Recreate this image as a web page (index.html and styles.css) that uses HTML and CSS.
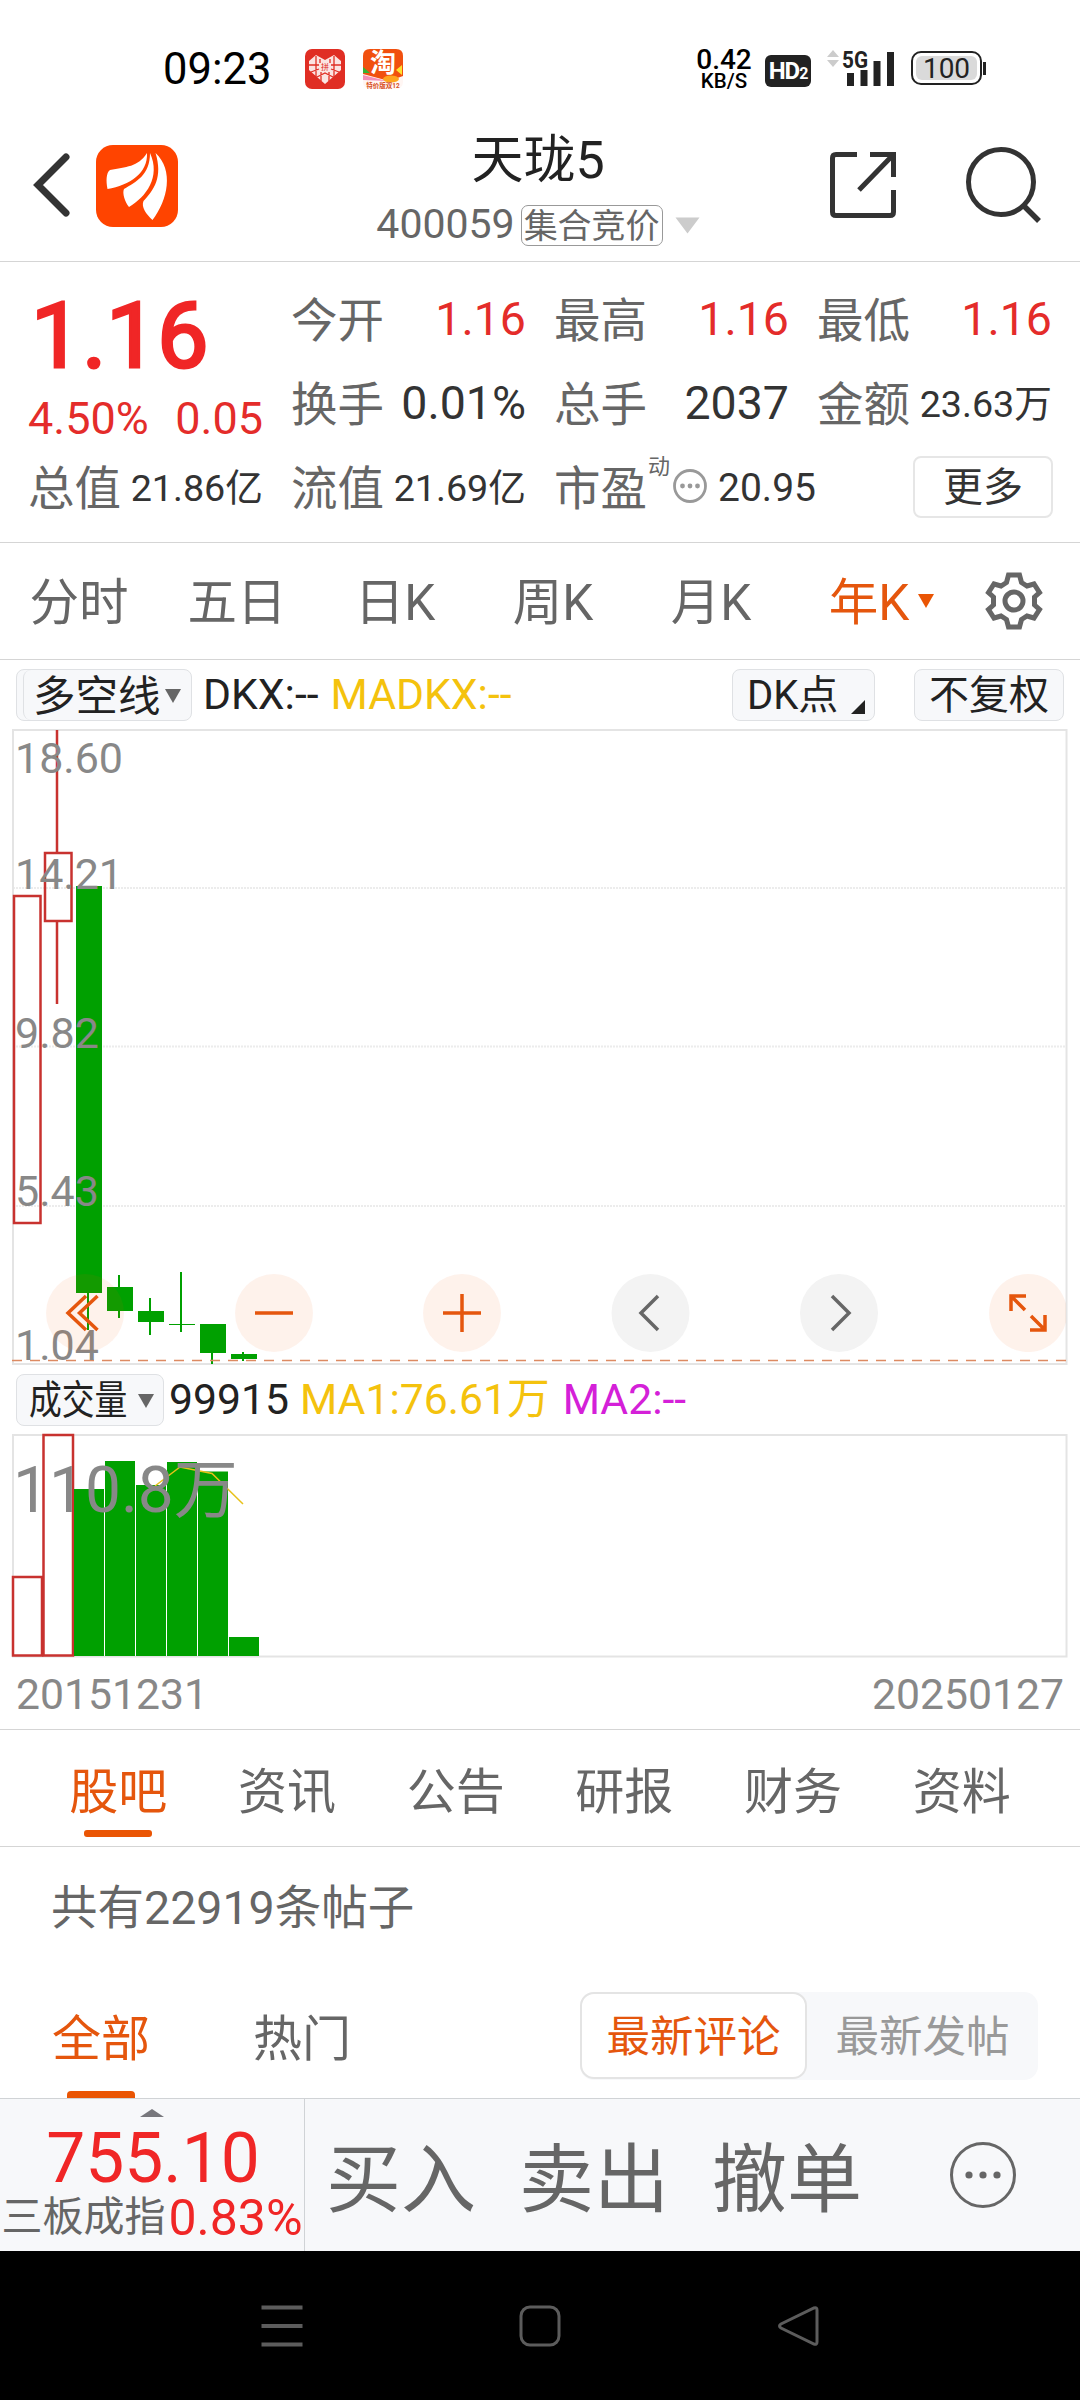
FILE: index.html
```html
<!DOCTYPE html>
<html lang="zh-CN">
<head>
    <meta charset="UTF-8">
    <title>天珑5</title>
    <link rel="stylesheet" href="styles.css">
</head>
<body>
<div class="status">
    <span class="time">09:23</span>
    <svg class="app1" width="40" height="40" viewBox="0 0 40 40">
        <rect width="40" height="40" rx="7" fill="#e02e24"/>
        <path d="M20 35 L4 21 V12 L11 6 L20 11 L29 6 L36 12 V21 Z" fill="#fbe4e2"/>
        <path d="M4 16 H14 M26 16 H36 M6 23 L14 20 M34 23 L26 20 M11 7 V29 M29 7 V29 M15 10 V14 M25 10 V14 M16 23 V32 M24 23 V32 M12 28 L20 24 L28 28" stroke="#e02e24" stroke-width="1.3" fill="none"/>
        <text x="20" y="21" font-size="8" text-anchor="middle" fill="#e02e24">拼</text>
    </svg>
    <svg class="app2" width="40" height="40" viewBox="0 0 40 40">
        <rect width="40" height="40" rx="7" fill="#fff6f3"/>
        <path d="M7 0 H33 Q40 0 40 7 V27 L26 32 L0 25 V7 Q0 0 7 0 Z" fill="#f1500f"/>
        <path d="M0 18 L7 24 L0 24 Z" fill="#35b336"/>
        <path d="M33 21 L39 16 L39 26 Z" fill="#ffe22e"/>
        <path d="M0 26 L24 32 L0 31 Z" fill="#f48fb8"/>
        <ellipse cx="28" cy="30" rx="8" ry="3.5" fill="#ffa51f"/>
        <text x="20" y="23" font-size="26" font-weight="700" text-anchor="middle" fill="#fff">淘</text>
        <text x="20" y="38.500" font-size="6.500" font-weight="700" text-anchor="middle" fill="#d8501e">特价版双12</text>
    </svg>
    <div class="speed"><b>0.42</b><i>KB/S</i></div>
    <div class="hd">HD<small>2</small></div>
    <svg class="signal" width="68" height="40" viewBox="0 0 68 40">
        <path d="M0 8 L6 1 L12 8 Z M0 11 L6 18 L12 11 Z" fill="#ccc"/>
        <text x="15" y="18.500" font-size="24" font-weight="700" fill="#222" textLength="26" lengthAdjust="spacingAndGlyphs">5G</text>
        <path d="M20 24h7v13h-7z M33.500 21h7v16h-7z M46.500 12h7v25h-7z M60 3h7v34h-7z" fill="#222"/>
    </svg>
    <div class="battery"><span>100</span></div>
</div>

<div class="header">
    <svg class="back" width="40" height="64" viewBox="0 0 40 64">
        <path d="M34 4 L6 32 L34 60" fill="none" stroke="#333" stroke-width="7" stroke-linecap="round"/>
    </svg>
    <svg class="logo" width="82" height="82" viewBox="0 0 82 82">
        <rect width="82" height="82" rx="17" fill="#ff4400"/>
        <path d="M51 8 C42 22 30 22 14 25 C10 28 10 36 11.500 44 C34 40 52 28 51 8 Z" fill="#fff"/>
        <path d="M54 8 C54 30 40 37 28 44 C26 48 29 57 33 62 C50 52 65 32 54 8 Z" fill="#fff"/>
        <path d="M59.500 8 C67 32 58 45 47.500 56 C45 62 50 69 56.500 75 C72 55 78 25 59.500 8 Z" fill="#fff"/>
    </svg>
    <div class="name">
        <h1>天珑5</h1>
        <div class="code">
            <span>400059</span>
            <em>集合竞价</em>
            <svg width="25" height="17" viewBox="0 0 25 17"><path d="M0.500 0.500 H24.500 L12.500 16.500 Z" fill="#ccc"/></svg>
        </div>
    </div>
    <svg class="share" width="66" height="66" viewBox="0 0 66 66">
        <path d="M27 2.500 H6 Q2.500 2.500 2.500 6 V60 Q2.500 63.500 6 63.500 H60 Q63.500 63.500 63.500 60 V38 M40 2.500 H63.500 V25 M63 3 L29 38" fill="none" stroke="#333" stroke-width="5"/>
    </svg>
    <svg class="search" width="80" height="80" viewBox="0 0 80 80">
        <circle cx="36" cy="36" r="32.500" fill="none" stroke="#333" stroke-width="5"/>
        <path d="M59 60 L74 75" stroke="#333" stroke-width="5.500"/>
    </svg>
</div>

<div class="quote">
    <div class="main">
        <div class="price">1.16</div>
        <div class="change"><span>4.50%</span><span>0.05</span></div>
    </div>
    <div class="cell"><label>今开</label><b class="red">1.16</b></div>
    <div class="cell"><label>最高</label><b class="red">1.16</b></div>
    <div class="cell"><label>最低</label><b class="red">1.16</b></div>
    <div class="cell"><label>换手</label><b>0.01%</b></div>
    <div class="cell"><label>总手</label><b>2037</b></div>
    <div class="cell"><label>金额</label><b class="small">23.63万</b></div>
    <div class="cell"><label>总值</label><b class="small">21.86亿</b></div>
    <div class="cell"><label>流值</label><b class="small">21.69亿</b></div>
    <div class="cell pe">
        <label>市盈</label><sup>动</sup>
        <svg width="34" height="34" viewBox="0 0 34 34">
            <circle cx="17" cy="17" r="15.500" fill="none" stroke="#999" stroke-width="2.800"/>
            <g fill="#999"><circle cx="9.500" cy="17" r="2.400"/><circle cx="17" cy="17" r="2.400"/><circle cx="24.500" cy="17" r="2.400"/></g>
        </svg>
        <b>20.95</b>
    </div>
    <div class="more">更多</div>
</div>

<div class="period">
    <span>分时</span>
    <span>五日</span>
    <span>日K</span>
    <span>周K</span>
    <span>月K</span>
    <span class="on">年K<i class="arrow"></i></span>
    <svg width="60" height="60" viewBox="-30 -30 60 60" fill="none" stroke="#666" stroke-width="5">
        <path d="M-5.500 -26 H5.500 L7.500 -18.500 L13 -15 L20 -17 L25.500 -8.500 L20.500 -4 V4 L25.500 8.500 L20 17 L13 15 L7.500 18.500 L5.500 26 H-5.500 L-7.500 18.500 L-13 15 L-20 17 L-25.500 8.500 L-20.500 4 V-4 L-25.500 -8.500 L-20 -17 L-13 -15 L-7.500 -18.500 Z"/>
        <circle r="9"/>
    </svg>
</div>

<div class="bar">
    <div class="btn multi"><span>多空线</span><i class="arrow"></i></div>
    <span class="dkx">DKX:--</span>
    <span class="yellow">MADKX:--</span>
    <div class="btn dk">DK点<i></i></div>
    <div class="btn fq">不复权</div>
</div>

<svg class="kline" width="1080" height="640" viewBox="0 727 1080 640">
    <g stroke="#ececec" stroke-width="2" stroke-dasharray="2 1">
        <path d="M13 888 H1066 M13 1046.500 H1066 M13 1206 H1066"/>
    </g>
    <rect x="13" y="730" width="1053.500" height="634" fill="none" stroke="#e4e4e4" stroke-width="2"/>
    <g fill="none" stroke="#c8322f" stroke-width="2.500">
        <rect x="14" y="896" width="26.500" height="327"/>
        <rect x="45" y="853" width="26.500" height="68"/>
        <path d="M57 730 V852 M57 922 V1004"/>
    </g>
    <g fill="#00a000">
        <rect x="76" y="886" width="26" height="407"/>
        <rect x="87" y="1293" width="2" height="37"/>
        <rect x="107" y="1287" width="26" height="24"/>
        <rect x="118" y="1275" width="2" height="43"/>
        <rect x="138" y="1311" width="26" height="11"/>
        <rect x="149" y="1298" width="2" height="37"/>
        <rect x="169" y="1324" width="26" height="1"/>
        <rect x="180" y="1272" width="2" height="60"/>
        <rect x="200" y="1324" width="26" height="29"/>
        <rect x="211" y="1353" width="2" height="11"/>
        <rect x="231" y="1354" width="26" height="5"/>
        <rect x="242" y="1352" width="2" height="9"/>
    </g>
    <path d="M12 1360.500 H1066" stroke="#dd8a62" stroke-width="1.300" stroke-dasharray="10 8"/>
    <g font-size="43" fill="#888">
        <text x="15" y="773">18.60</text>
        <text x="15" y="888.500">14.21</text>
        <text x="15" y="1047.500">9.82</text>
        <text x="15" y="1206">5.43</text>
        <text x="15" y="1360">1.04</text>
    </g>
    <g fill="#f05a00" fill-opacity=".08">
        <circle cx="85" cy="1313" r="39"/>
        <circle cx="274" cy="1313" r="39"/>
        <circle cx="462" cy="1313" r="39"/>
        <path d="M1066 1304 A39 39 0 1 0 1066 1322 Z"/>
    </g>
    <g fill="#f3f3f3">
        <circle cx="650.500" cy="1313" r="39"/>
        <circle cx="839" cy="1313" r="39"/>
    </g>
    <g fill="none" stroke="#e5560d" stroke-width="3.500">
        <path d="M86 1296 L68 1313 L86 1330 M97.500 1296 L79.500 1313 L97.500 1330"/>
        <path d="M255 1313 H293 M443 1313 H481 M462 1294 V1332"/>
        <path d="M1011 1311 V1296 H1026 M1012 1297 L1025 1310 M1030 1330 H1045 V1315 M1044 1329 L1031 1316"/>
    </g>
    <path d="M658 1296 L641 1313 L658 1330 M832 1296 L849 1313 L832 1330" fill="none" stroke="#666" stroke-width="3.500"/>
</svg>

<div class="bar vol">
    <div class="btn cjl"><span>成交量</span><i class="arrow"></i></div>
    <span class="num">99915</span>
    <span class="yellow">MA1:76.61万</span>
    <span class="purple">MA2:--</span>
</div>

<svg class="volume" width="1080" height="226" viewBox="0 1432 1080 226">
    <rect x="13" y="1435" width="1053.500" height="221.500" fill="none" stroke="#e4e4e4" stroke-width="2"/>
    <g fill="none" stroke="#c8322f" stroke-width="2.500">
        <rect x="13" y="1577" width="29" height="78.500"/>
        <rect x="43.500" y="1435" width="29.500" height="220.500"/>
    </g>
    <g fill="#00a000">
        <rect x="74" y="1489" width="30" height="167"/>
        <rect x="105" y="1461" width="30" height="195"/>
        <rect x="136" y="1485" width="30" height="171"/>
        <rect x="167" y="1462" width="30" height="194"/>
        <rect x="198" y="1471.500" width="30" height="184.500"/>
        <rect x="229" y="1637" width="30" height="19"/>
    </g>
    <path d="M155 1486 L180 1467 L212 1473.500 L243 1504" fill="none" stroke="#e8c11a" stroke-width="1.500"/>
    <text x="13" y="1512" font-size="64" fill="#888">110.8万</text>
</svg>

<div class="dates"><span>20151231</span><span>20250127</span></div>

<div class="tabs">
    <span class="on">股吧</span>
    <span>资讯</span>
    <span>公告</span>
    <span>研报</span>
    <span>财务</span>
    <span>资料</span>
</div>

<div class="total">共有22919条帖子</div>

<div class="filter">
    <span class="on">全部</span>
    <span>热门</span>
    <div class="sort"><b>最新评论</b><span>最新发帖</span></div>
</div>

<div class="trade">
    <div class="index">
        <svg width="24" height="8" viewBox="0 0 24 8"><path d="M0 8 L12 0 L24 8 Z" fill="#77777c"/></svg>
        <div class="point">755.10</div>
        <div class="rate"><span>三板成指</span><b>0.83%</b></div>
    </div>
    <span class="act">买入</span>
    <span class="act">卖出</span>
    <span class="act">撤单</span>
    <svg class="dots" width="68" height="68" viewBox="0 0 68 68">
        <circle cx="34" cy="34" r="31.500" fill="none" stroke="#666" stroke-width="3"/>
        <g fill="#666"><circle cx="20" cy="34" r="3.600"/><circle cx="34" cy="34" r="3.600"/><circle cx="48" cy="34" r="3.600"/></g>
    </svg>
</div>

<div class="nav">
    <svg width="44" height="44" viewBox="0 0 44 44"><path d="M1.500 3.500 H42.500 M1.500 22 H42.500 M1.500 40.500 H42.500" stroke="#5c5c5c" stroke-width="4"/></svg>
    <svg width="44" height="44" viewBox="0 0 44 44"><rect x="3" y="3" width="38" height="38" rx="9" fill="none" stroke="#5c5c5c" stroke-width="3"/></svg>
    <svg width="44" height="44" viewBox="0 0 44 44"><path d="M38 4 Q41 3 41 6 V38 Q41 41 38 40 L5 24 Q2 22 5 20 Z" fill="none" stroke="#5c5c5c" stroke-width="3"/></svg>
</div>
</body>
</html>
```

FILE: styles.css
```css
* {
    box-sizing: border-box;
}

body {
    margin: 0;
    width: 1080px;
    height: 2400px;
    background: #fff;
    color: #333;
    font-family: Roboto, "Noto Sans CJK SC", sans-serif;
    line-height: 1.2;
    overflow: hidden;
}

svg {
    display: block;
    flex: none;
}

b, i, em {
    font-weight: 400;
    font-style: normal;
}

/* 状态栏 */
.status {
    display: flex;
    align-items: flex-start;
    height: 90px;
    padding: 49px 93px 0 163px;
    color: #000;
}

.time {
    width: 142px;
    font-size: 43.5px;
    line-height: 42px;
}

.app2 {
    margin-left: 18px;
}

.speed {
    width: 62px;
    margin-left: auto;
    text-align: center;
}

.speed b, .speed i {
    display: block;
    font-size: 28px;
    font-weight: 500;
    line-height: 22px;
}

.speed i {
    font-size: 20.5px;
    line-height: 20px;
}

.hd {
    width: 46px;
    height: 32px;
    margin: 6px 0 0 10px;
    border-radius: 6px;
    background: #222;
    color: #fff;
    font-size: 24px;
    font-weight: 700;
    line-height: 33px;
    text-align: center;
    letter-spacing: -1px;
}

.hd small {
    font-size: 16px;
}

.signal {
    margin-left: 16px;
}

.battery {
    position: relative;
    width: 71px;
    height: 34px;
    margin: 2px 5px 0 16px;
    padding: 3px;
    border: 2px solid #222;
    border-radius: 10px;
}

.battery span {
    display: block;
    height: 24px;
    border-radius: 6px;
    background: #dadada;
    color: #222;
    font-size: 28px;
    line-height: 25px;
    text-align: center;
}

.battery::after {
    content: "";
    position: absolute;
    top: 9px;
    right: -6px;
    width: 3px;
    height: 13px;
    background: #222;
}

/* 头部 */
.header {
    display: flex;
    align-items: center;
    height: 172px;
    padding: 19px 35px 0 32px;
    border-bottom: 1px solid #d5d5d5;
}

.logo {
    margin: 1px 0 0 24px;
}

.name {
    display: flex;
    flex-direction: column;
    align-items: center;
    align-self: flex-start;
    width: 326px;
    margin-left: 197px;
}

.name h1 {
    margin: 13px 0 0;
    font-size: 52px;
    font-weight: 400;
    line-height: 78px;
    color: #222;
}

.code {
    display: flex;
    align-items: center;
    height: 42px;
    margin-top: 4px;
    color: #666;
}

.code span {
    font-size: 41px;
}

.code em {
    height: 41px;
    margin: 0 12px 0 6px;
    padding: 0 2px;
    border: 1.5px solid #999;
    border-radius: 7px;
    font-size: 34px;
    line-height: 40px;
}

.share {
    margin-left: 129px;
}

.search {
    margin: 2px 0 0 auto;
}

/* 行情 */
.quote {
    display: grid;
    grid-template-columns: repeat(4, 235px);
    grid-template-rows: repeat(3, 84px);
    column-gap: 28px;
    height: 281px;
    padding: 16px 28px 0;
    border-bottom: 1px solid #d5d5d5;
}

.main {
    grid-row: 1 / 3;
    color: #f02626;
}

.price {
    height: 114px;
    padding-left: 3px;
    font-size: 91px;
    line-height: 116px;
    -webkit-text-stroke: 3px #f02626;
}

.change {
    display: flex;
    justify-content: space-between;
    font-size: 45px;
    line-height: 54px;
    color: #e42c2a;
}

.cell {
    display: flex;
    align-items: center;
    justify-content: space-between;
    white-space: nowrap;
}

.cell label {
    padding-top: 3px;
    font-size: 46.5px;
    color: #666;
}

.cell b {
    font-size: 46.5px;
}

.cell b.small {
    padding-top: 1px;
    font-size: 37.7px;
}

.cell b.red {
    color: #e42c2a;
}

.pe {
    width: 264px;
    justify-content: flex-start;
}

.pe sup {
    align-self: flex-start;
    margin: 6px 3px 0 1px;
    font-size: 22px;
    line-height: 30px;
    color: #666;
}

.pe svg {
    margin-top: -5px;
}

.pe b {
    margin-left: 11px;
    font-size: 39px;
}

.more {
    align-self: center;
    justify-self: end;
    width: 140px;
    height: 62px;
    margin: -3px -1px 0 0;
    border: 2px solid #e6e6e6;
    border-radius: 8px;
    font-size: 40px;
    line-height: 60px;
    text-align: center;
}

/* 周期 */
.period {
    display: flex;
    align-items: center;
    height: 117px;
    border-bottom: 1px solid #d5d5d5;
    font-size: 49.5px;
    color: #666;
}

.period span {
    position: relative;
    width: 158px;
    padding-top: 6px;
    text-align: center;
}

.period svg {
    margin-left: 36px;
}

.arrow {
    width: 0;
    height: 0;
    border: 8px solid transparent;
    border-top: 14px solid #666;
    border-bottom: 0;
}

.period .on {
    color: #e5560d;
}

.period .arrow {
    position: absolute;
    top: 26px;
    right: 14px;
    border-top-color: #ea5504;
}

/* 指标 */
.bar {
    display: flex;
    align-items: center;
    height: 67px;
    padding: 3px 16px 0;
    font-size: 42.7px;
    white-space: nowrap;
    color: #222;
}

.btn {
    display: flex;
    align-items: center;
    height: 52px;
    padding-top: 2px;
    border: 1px solid #dfe1e4;
    border-radius: 8px;
    background: #f7f8fa;
    font-size: 40px;
}

.multi {
    position: relative;
    width: 176px;
    padding-left: 16px;
    font-size: 42.5px;
}

.multi::before {
    content: "";
    position: absolute;
    top: 0;
    left: 6px;
    width: 30px;
    height: 50px;
    border-left: 1px solid #dfe1e4;
    border-radius: 8px;
}

.multi .arrow {
    margin-left: 4px;
}

.dkx {
    margin-left: 11px;
}

.yellow {
    margin-left: 12px;
    color: #f4c20d;
}

.dk {
    width: 143px;
    margin-left: auto;
    padding-left: 14px;
}

.dk i {
    margin: 22px 0 0 13px;
    border-left: 14px solid transparent;
    border-bottom: 14px solid #222;
}

.fq {
    width: 150px;
    margin-left: 39px;
    justify-content: center;
}

.vol {
    height: 65px;
    padding-top: 1px;
}

.cjl {
    width: 148px;
    padding-left: 12px;
}

/* 按钮里放不下，横向压缩 */
.cjl span {
    width: 98px;
    transform: scaleX(.82);
    transform-origin: left;
}

.cjl .arrow {
    margin-left: 11px;
}

.num {
    margin-left: 5px;
}

.vol .yellow {
    margin-left: 11px;
}

.purple {
    margin-left: 13px;
    color: #d420d8;
}

.dates {
    display: flex;
    justify-content: space-between;
    height: 72px;
    padding: 0 16px;
    border-bottom: 1px solid #d5d5d5;
    font-size: 42.7px;
    line-height: 73px;
    color: #888;
}

/* 栏目 */
.tabs {
    display: flex;
    height: 117px;
    padding: 0 34px;
    border-bottom: 1px solid #d5d5d5;
    font-size: 49px;
    line-height: 126px;
    color: #666;
}

.tabs span {
    position: relative;
    flex: 1;
    text-align: center;
}

.tabs .on, .filter .on {
    color: #e5560d;
}

.tabs .on::after, .filter .on::after {
    content: "";
    position: absolute;
    left: 50%;
    bottom: 9px;
    width: 68px;
    height: 7px;
    margin-left: -34px;
    border-radius: 3px;
    background: #ea5504;
}

.total {
    height: 124px;
    padding-left: 51px;
    font-size: 46.5px;
    line-height: 123px;
    color: #666;
}

.filter {
    display: flex;
    height: 127px;
    padding: 21px 42px 0 52px;
    font-size: 49px;
    line-height: 96px;
    color: #666;
}

.filter > span {
    position: relative;
    margin-right: 103px;
}

.filter .on::after {
    bottom: 0;
    border-radius: 4px 4px 0 0;
}

.sort {
    display: flex;
    width: 458px;
    height: 88px;
    margin-left: auto;
    border-radius: 14px;
    background: #f7f8fa;
    font-size: 43.5px;
    line-height: 91px;
    text-align: center;
    color: #999;
}

.sort b {
    width: 227px;
    height: 87px;
    border: 2px solid #e4e4e4;
    border-radius: 14px;
    background: #fff;
    line-height: 87px;
    color: #e5560d;
}

.sort span {
    flex: 1;
}

/* 底部交易栏 */
.trade {
    display: flex;
    align-items: center;
    height: 153px;
    border-top: 1px solid #d0d3d6;
    background: #f7f8fa;
    color: #666;
}

.index {
    display: flex;
    flex-direction: column;
    align-items: center;
    width: 305px;
    height: 152px;
    padding-top: 10px;
    border-right: 1px solid #d0d3d6;
}

.point {
    padding-left: 2px;
    font-size: 69.5px;
    line-height: 84px;
    color: #f02626;
}

.rate {
    display: flex;
    align-items: center;
    height: 34px;
    font-size: 41px;
    white-space: nowrap;
}

.rate b {
    margin-left: 3px;
    font-size: 50px;
    color: #f02626;
}

.act {
    margin-left: 21px;
    margin-right: 22px;
    padding-top: 9px;
    font-size: 75px;
}

.dots {
    margin-left: 65px;
}

/* 导航键 */
.nav {
    display: flex;
    justify-content: space-between;
    height: 149px;
    padding: 53px 260px 0;
    background: #000;
}
```
